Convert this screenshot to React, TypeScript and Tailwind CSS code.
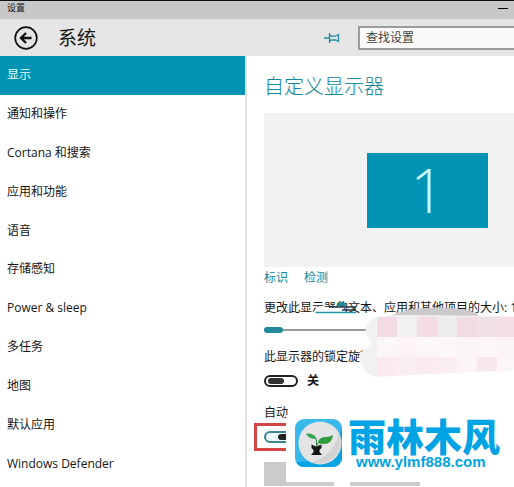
import React, { useState } from 'react';

const navItems = [
  '显示',
  '通知和操作',
  'Cortana 和搜索',
  '应用和功能',
  '语音',
  '存储感知',
  'Power & sleep',
  '多任务',
  '地图',
  '默认应用',
  'Windows Defender',
];

// Colour of each mosaic cell, row by row
const mosaic = [
  ['#f2dbe5', '#f2f0f2', '#f4dce7', '#eeebee', '#f2dbe5', '#f1e0e8', '#f5dde8'],
  ['#fbf6fa', '#fcf4f8', '#faf6f9', '#fcf7fa', '#fbf4f8', '#fcf6f9', '#fcf5f8'],
  ['#fbeaf0', '#fbeef3', '#fbebf1', '#fbeef3', '#fcf5f8', '#f9e7ef', '#fcf6f9'],
];

const BackIcon: React.FC = () => (
  <svg viewBox="0 0 24 24" className="w-6 h-6" fill="none" stroke="#111">
    <circle cx="12" cy="12" r="10.8" strokeWidth="1.7" />
    <path d="M17.5 12H7.5M12 7l-5 5 5 5" strokeWidth="2.4" />
  </svg>
);

const PinIcon: React.FC = () => (
  <svg viewBox="0 0 16 12" className="w-4 h-3" fill="none" stroke="#1c8a9c" strokeWidth="1.3">
    <path d="M0 6h5.5M5.5 1v10M5.5 3.2l2 1h4l3-1.700v7L11.500 8h-4l-2 1" />
  </svg>
);

const Mosaic: React.FC = () => (
  <svg viewBox="0 0 156 74" width="156" height="74" className="absolute left-24 -top-4 pointer-events-none">
    <defs>
      <clipPath id="smudge">
        <path d="M14 12 Q24 10 38 9 L156 10 V64 Q90 67 30 70 Q8 73 4 63 Q-3 54 1 46 Q7 42 12 37 Q4 30 6 22 Q8 15 14 12Z" />
      </clipPath>
    </defs>
    <path d="M26 12 Q40 5 54 3 Q82 0 108 4 L118 8 V12Z" fill="#cbc9cb" />
    <g clipPath="url(#smudge)">
      <rect width="156" height="74" fill="#f2f1f2" />
      {mosaic.map((row, y) =>
        row.map((color, x) => (
          <rect key={`${x}-${y}`} x={17 + x * 20} y={11 + y * 20} width="20" height="20" fill={color} />
        ))
      )}
    </g>
  </svg>
);

const LogoIcon: React.FC = () => (
  <svg viewBox="0 0 48 48" className="w-12 h-12 shrink-0">
    <rect width="47" height="48" rx="9" fill="#39b8ec" />
    <path d="M47 10V39a9 9 0 0 1-9 9H9a9 9 0 0 1-8-5Q34 44 47 10Z" fill="#07a3e2" />
    <circle cx="25" cy="24" r="21.5" fill="#e4e4e4" />
    <path d="M44 15a21.5 21.5 0 0 1-28 28Q36 39 44 15Z" fill="#d3d3d3" />
    <path d="M11 14.500Q20 14 21.500 20Q14 20.500 11 14.500Z" fill="#35a852" />
    <path d="M23 23.500Q24 18 31 18Q35 18 38 16Q37 25 29 25Q25 25 23 23.500Z" fill="#2e9c3f" />
    <path d="M21 19.500Q22 23 21.500 27Q21.500 24 25 23" stroke="#2e7d3a" strokeWidth="1" fill="none" />
    <path d="M16.500 25.500L21 27.500 26.500 25.500V29L24.500 31V33L27 36H16L18.500 33V31L16.500 29Z" fill="#161616" />
  </svg>
);

const App: React.FC = () => {
  const [active, setActive] = useState(0);
  const [scale, setScale] = useState(0);
  const [locked, setLocked] = useState(false);
  const [brightness, setBrightness] = useState(true);

  return (
    <div className="flex flex-col h-screen overflow-hidden bg-white text-[12px] leading-5 text-[#151515] font-['Open_Sans','Noto_Sans_CJK_SC',sans-serif]">
      <div className="flex items-center justify-between h-[19px] shrink-0 pl-[7px] pr-[6px] border-t border-[#141018] bg-[#c7c7c7]">
        <span className="text-[9px] leading-3 pb-1">设置</span>
        <button aria-label="最小化" className="w-[10px] h-3 flex">
          <span className="w-full h-px mt-1 bg-black" />
        </button>
      </div>

      <header className="flex items-center h-[37px] shrink-0 pl-[14px] bg-[#e6e6e6]">
        <button aria-label="返回">
          <BackIcon />
        </button>
        <h1 className="ml-5 text-[19px] leading-6">系统</h1>
        <div className="flex-1" />
        <button aria-label="固定" className="mr-[18px]">
          <PinIcon />
        </button>
        <input
          aria-label="查找设置"
          placeholder="查找设置"
          className="w-[156px] h-6 pl-[6px] border-2 border-r-0 border-[#9c9c9c] bg-[#fafafa] text-[12px] placeholder:text-[#444] outline-none"
        />
      </header>

      <div className="flex flex-1 min-h-0">
        <nav className="grid auto-rows-fr w-[247px] shrink-0 pb-1 border-r-2 border-[#e2e2e2]">
          {navItems.map((item, i) => (
            <button
              key={item}
              onClick={() => setActive(i)}
              className={
                i === active
                  ? 'pl-[7px] text-left bg-[#0093b3] text-[#d9fbff]'
                  : 'pl-[7px] text-left'
              }
            >
              {item}
            </button>
          ))}
        </nav>

        <main className="flex-1 min-w-0 overflow-hidden pt-4 pl-[17px]">
          <h2 className="text-[20px] leading-[30px] font-light text-[#14879b]">自定义显示器</h2>
          <div className="flex items-center h-[154px] mt-[11px] pl-[103px] bg-[#f2f2f2]">
            <div className="flex items-center justify-center w-[121px] h-[75px] bg-[#0093b3] text-[#c9f9ff] text-[60px] leading-[75px] font-light">
              1
            </div>
          </div>
          <div className="flex gap-4 mt-px text-[#14879b]">
            <a href="#identify">标识</a>
            <a href="#detect">检测</a>
          </div>

          <div className="relative mt-[10px] whitespace-nowrap">
            <label htmlFor="scale">更改此显示器的文本、应用和其他项目的大小: 1</label>
            <svg viewBox="0 0 44 16" width="44" height="16" className="absolute left-[52px] top-0">
              <path d="M0 9h28v6H0Z" fill="#fff" />
              <path d="M20 8q4-6 8-4l3 4Z" fill="#23899a" />
              <path d="M13 9h27M26 12h14" stroke="#1d3440" strokeWidth="1.3" />
              <path d="M0 14.5h40" stroke="#2495a6" strokeWidth="1.3" />
            </svg>
          </div>
          <div className="relative flex items-center h-4 mt-1">
            <input
              id="scale"
              type="range"
              min={0}
              max={3}
              value={scale}
              onChange={e => setScale(Number(e.target.value))}
              className="w-full h-[2px] appearance-none bg-[#999] [&::-webkit-slider-thumb]:appearance-none [&::-webkit-slider-thumb]:w-[19px] [&::-webkit-slider-thumb]:h-[6px] [&::-webkit-slider-thumb]:rounded-full [&::-webkit-slider-thumb]:bg-[#23899a]"
            />
            <Mosaic />
          </div>

          <label htmlFor="lock" className="block mt-[9px] whitespace-nowrap">此显示器的锁定旋转</label>
          <div className="flex items-center gap-[9px] mt-1">
            <input
              id="lock"
              type="checkbox"
              checked={locked}
              onChange={e => setLocked(e.target.checked)}
              className="appearance-none flex items-center w-[34px] h-3 px-[2px] rounded-full border-2 border-[#222] before:w-4 before:h-[6px] before:rounded-full before:bg-[#333] checked:justify-end"
            />
            <span className="font-bold">{locked ? '开' : '关'}</span>
          </div>

          <div className="relative mt-3">
            <label htmlFor="brightness" className="block whitespace-nowrap">自动</label>
            <div className="relative flex items-center h-5 mt-1">
              <div className="absolute -left-[10px] -top-1 w-24 h-7 border-[3px] border-[#d64545]" />
              <input
                id="brightness"
                type="checkbox"
                checked={brightness}
                onChange={e => setBrightness(e.target.checked)}
                className="relative appearance-none flex items-center w-[34px] h-3 px-[2px] rounded-full border-2 border-[#3a858f] bg-[#edfdfd] before:w-4 before:h-[6px] before:rounded-full before:bg-[#222] checked:justify-end"
              />
            </div>
            <div className="flex gap-4 mt-[15px]">
              <button aria-label="应用" className="w-[70px] h-6 bg-[#cbcbcb]" />
              <button aria-label="取消" className="w-[70px] h-6 bg-[#cbcbcb]" />
            </div>

            <a
              href="#ylmf"
              className="absolute left-[22px] top-3 flex gap-[5px] w-60 h-[67px] pl-[9px] pt-1 bg-white text-[#00a3e4] font-bold whitespace-nowrap"
            >
              <LogoIcon />
              <span className="flex flex-col">
                <span className="text-[38px] leading-[34px] font-black">雨林木风</span>
                <span className="pl-2 text-[15px] leading-[18px] font-['Liberation_Sans',sans-serif]">www.ylmf888.com</span>
              </span>
            </a>
          </div>
        </main>
      </div>
    </div>
  );
};

export default App;
